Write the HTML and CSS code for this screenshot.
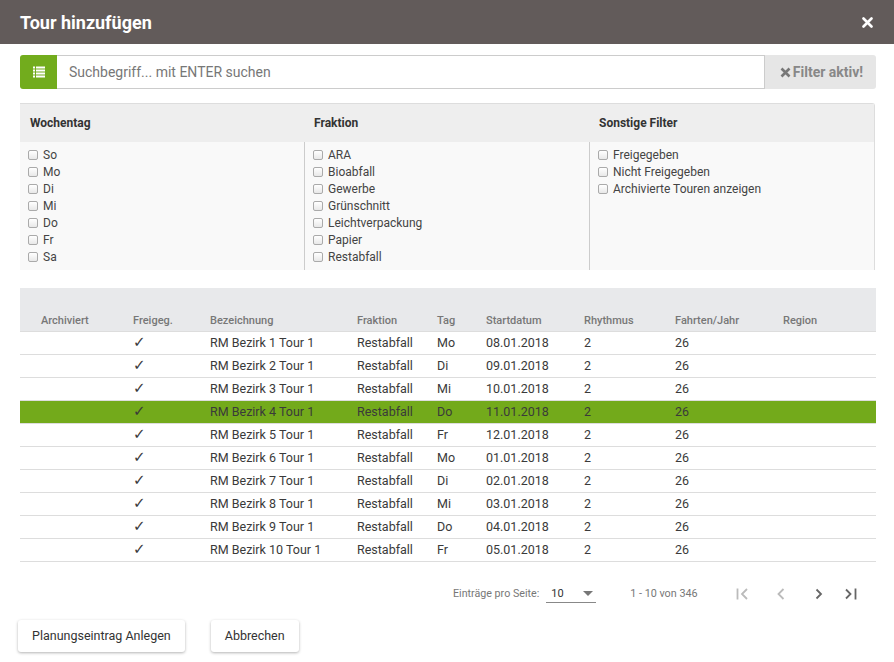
FILE: index.html
```html
<!DOCTYPE html>
<html lang="de">
<head>
<meta charset="utf-8">
<title>Tour hinzufügen</title>
<link rel="stylesheet" href="styles.css">
</head>
<body>
<div class="dialog">
  <header class="titlebar">
    <h1 class="title">Tour hinzufügen</h1>
    <button class="close" aria-label="Schließen">
      <svg width="11" height="11" viewBox="0 0 11 11"><path d="M1.5 1.5L9.5 9.5M9.5 1.5L1.5 9.5" stroke="#fff" stroke-width="2.6" stroke-linecap="round"/></svg>
    </button>
  </header>

  <div class="searchbar">
    <button class="listbtn" aria-label="Filter">
      <svg width="12" height="12" viewBox="0 0 12 12">
        <rect x="0" y="0.5" width="2" height="2" fill="#fff"/>
        <rect x="3" y="0.5" width="9" height="2" fill="#fff"/>
        <rect x="0" y="3.5" width="2" height="2" fill="#fff"/>
        <rect x="3" y="3.5" width="9" height="2" fill="#fff"/>
        <rect x="0" y="6.5" width="2" height="2" fill="#fff"/>
        <rect x="3" y="6.5" width="9" height="2" fill="#fff"/>
        <rect x="0" y="9.5" width="2" height="2" fill="#fff"/>
        <rect x="3" y="9.5" width="9" height="2" fill="#fff"/>
      </svg>
    </button>
    <input class="search" type="text" placeholder="Suchbegriff... mit ENTER suchen">
    <button class="filterbtn">
      <svg width="11" height="11" viewBox="0 0 11 11"><path d="M1.5 1.5L9.5 9.5M9.5 1.5L1.5 9.5" stroke="#777" stroke-width="2.6"/></svg>
      Filter aktiv!
    </button>
  </div>

  <div class="filters">
    <div class="fcol">
      <div class="fhead">Wochentag</div>
      <div class="fbody">
        <label class="opt"><span class="cb"></span>So</label>
        <label class="opt"><span class="cb"></span>Mo</label>
        <label class="opt"><span class="cb"></span>Di</label>
        <label class="opt"><span class="cb"></span>Mi</label>
        <label class="opt"><span class="cb"></span>Do</label>
        <label class="opt"><span class="cb"></span>Fr</label>
        <label class="opt"><span class="cb"></span>Sa</label>
      </div>
    </div>
    <div class="fcol mid">
      <div class="fhead">Fraktion</div>
      <div class="fbody bordered">
        <label class="opt"><span class="cb"></span>ARA</label>
        <label class="opt"><span class="cb"></span>Bioabfall</label>
        <label class="opt"><span class="cb"></span>Gewerbe</label>
        <label class="opt"><span class="cb"></span>Grünschnitt</label>
        <label class="opt"><span class="cb"></span>Leichtverpackung</label>
        <label class="opt"><span class="cb"></span>Papier</label>
        <label class="opt"><span class="cb"></span>Restabfall</label>
      </div>
    </div>
    <div class="fcol last">
      <div class="fhead">Sonstige Filter</div>
      <div class="fbody bordered">
        <label class="opt"><span class="cb"></span>Freigegeben</label>
        <label class="opt"><span class="cb"></span>Nicht Freigegeben</label>
        <label class="opt"><span class="cb"></span>Archivierte Touren anzeigen</label>
      </div>
    </div>
  </div>

  <table class="tours">
    <colgroup>
      <col class="c1"><col class="c2"><col class="c3"><col class="c4"><col class="c5"><col class="c6"><col class="c7"><col class="c8"><col class="c9">
    </colgroup>
    <thead>
      <tr><th class="first">Archiviert</th><th>Freigeg.</th><th>Bezeichnung</th><th>Fraktion</th><th>Tag</th><th>Startdatum</th><th>Rhythmus</th><th>Fahrten/Jahr</th><th>Region</th></tr>
    </thead>
    <tbody>
      <tr><td class="first"></td><td class="chk">✓</td><td>RM Bezirk 1 Tour 1</td><td>Restabfall</td><td>Mo</td><td>08.01.2018</td><td>2</td><td>26</td><td></td></tr>
      <tr><td class="first"></td><td class="chk">✓</td><td>RM Bezirk 2 Tour 1</td><td>Restabfall</td><td>Di</td><td>09.01.2018</td><td>2</td><td>26</td><td></td></tr>
      <tr><td class="first"></td><td class="chk">✓</td><td>RM Bezirk 3 Tour 1</td><td>Restabfall</td><td>Mi</td><td>10.01.2018</td><td>2</td><td>26</td><td></td></tr>
      <tr class="selected"><td class="first"></td><td class="chk">✓</td><td>RM Bezirk 4 Tour 1</td><td>Restabfall</td><td>Do</td><td>11.01.2018</td><td>2</td><td>26</td><td></td></tr>
      <tr><td class="first"></td><td class="chk">✓</td><td>RM Bezirk 5 Tour 1</td><td>Restabfall</td><td>Fr</td><td>12.01.2018</td><td>2</td><td>26</td><td></td></tr>
      <tr><td class="first"></td><td class="chk">✓</td><td>RM Bezirk 6 Tour 1</td><td>Restabfall</td><td>Mo</td><td>01.01.2018</td><td>2</td><td>26</td><td></td></tr>
      <tr><td class="first"></td><td class="chk">✓</td><td>RM Bezirk 7 Tour 1</td><td>Restabfall</td><td>Di</td><td>02.01.2018</td><td>2</td><td>26</td><td></td></tr>
      <tr><td class="first"></td><td class="chk">✓</td><td>RM Bezirk 8 Tour 1</td><td>Restabfall</td><td>Mi</td><td>03.01.2018</td><td>2</td><td>26</td><td></td></tr>
      <tr><td class="first"></td><td class="chk">✓</td><td>RM Bezirk 9 Tour 1</td><td>Restabfall</td><td>Do</td><td>04.01.2018</td><td>2</td><td>26</td><td></td></tr>
      <tr><td class="first"></td><td class="chk">✓</td><td>RM Bezirk 10 Tour 1</td><td>Restabfall</td><td>Fr</td><td>05.01.2018</td><td>2</td><td>26</td><td></td></tr>
    </tbody>
  </table>

  <div class="paginator">
    <span class="pp-label">Einträge pro Seite:</span>
    <div class="pp-select">
      <span>10</span>
      <svg width="10" height="5" viewBox="0 0 10 5"><path d="M0 0H10L5 5Z" fill="#777"/></svg>
    </div>
    <span class="range">1 - 10 von 346</span>
    <div class="navs">
      <button class="nav disabled" aria-label="Erste Seite">
        <svg width="14" height="14" viewBox="0 0 14 14"><path d="M1.5 1.5V12.5" stroke="#bbb" stroke-width="1.8"/><path d="M11 2L6 7L11 12" fill="none" stroke="#bbb" stroke-width="1.8"/></svg>
      </button>
      <button class="nav disabled" aria-label="Vorherige Seite">
        <svg width="14" height="14" viewBox="0 0 14 14"><path d="M9.5 2L4.5 7L9.5 12" fill="none" stroke="#bbb" stroke-width="1.8"/></svg>
      </button>
      <button class="nav" aria-label="Nächste Seite">
        <svg width="14" height="14" viewBox="0 0 14 14"><path d="M4.5 2.5L9 7L4.5 11.5" fill="none" stroke="#666" stroke-width="1.8"/></svg>
      </button>
      <button class="nav" aria-label="Letzte Seite">
        <svg width="14" height="14" viewBox="0 0 14 14"><path d="M2 2.5L6.5 7L2 11.5" fill="none" stroke="#666" stroke-width="1.8"/><path d="M11.5 1.5V12.5" stroke="#666" stroke-width="1.8"/></svg>
      </button>
    </div>
  </div>

  <div class="actions">
    <button class="btn">Planungseintrag Anlegen</button>
    <button class="btn">Abbrechen</button>
  </div>
</div>
</body>
</html>
```

FILE: styles.css
```css
* { box-sizing: border-box; }
html, body { margin: 0; padding: 0; background: #fff; }
body {
  font-family: Roboto, "Liberation Sans", Arial, sans-serif;
  color: #333;
  width: 894px;
  height: 662px;
  overflow: hidden;
}
button { font-family: inherit; cursor: pointer; }

.titlebar {
  height: 44px;
  background: #625b5a;
  display: flex;
  align-items: center;
  justify-content: space-between;
  padding: 0 21px 0 20px;
}
.title {
  margin: 0;
  font-size: 18px;
  font-weight: 700;
  color: #fff;
  letter-spacing: 0;
}
.close {
  border: 0;
  background: transparent;
  padding: 0;
  width: 11px;
  height: 11px;
  display: flex;
}

.searchbar {
  display: flex;
  margin: 11px 18px 0 20px;
  height: 34px;
}
.listbtn {
  width: 37px;
  border: 0;
  background: #72ac1d;
  border-radius: 3px 0 0 3px;
  display: flex;
  align-items: center;
  justify-content: center;
  padding: 0;
}
.search {
  flex: 1;
  border: 1px solid #ccc;
  border-left: 0;
  font-family: inherit;
  font-size: 14px;
  padding: 0 12px;
  color: #555;
  outline: none;
}
.search::placeholder { color: #777; }
.filterbtn {
  width: 111px;
  border: 0;
  background: #e6e6e6;
  border-radius: 0 3px 3px 0;
  color: #888;
  font-weight: 700;
  font-size: 14px;
  display: flex;
  align-items: center;
  justify-content: center;
  gap: 2px;
  padding: 0 0 0 2px;
}

.filters {
  display: flex;
  margin: 14px 19px 0 20px;
  height: 167px;
  border-top: 1px solid #ddd;
  border-right: 1px solid #ddd;
  border-top-right-radius: 3px;
}
.fcol { flex: 0 0 284px; display: flex; flex-direction: column; }
.fcol.mid { flex-basis: 285px; }
.fcol.last { flex: 1; }
.fhead {
  height: 38px;
  background: #eee;
  font-size: 12px;
  font-weight: 700;
  display: flex;
  align-items: center;
  padding-left: 10px;
  color: #333;
}
.fbody {
  flex: 1;
  background: #f9f9f9;
  padding: 4px 0 0 8px;
  display: flex;
  flex-direction: column;
}
.fbody.bordered { border-left: 1px solid #ccc; }
.opt {
  display: flex;
  align-items: center;
  height: 17px;
  font-size: 12px;
  color: #444;
}
.cb {
  width: 10px;
  height: 10px;
  border: 1px solid #aaa;
  border-radius: 2px;
  background: linear-gradient(#fff, #e8e8e8);
  margin-right: 5px;
  flex: none;
}

.tours {
  margin: 18px 0 0 20px;
  width: 856px;
  table-layout: fixed;
  border-collapse: collapse;
}
.c1 { width: 113px; }
.c2 { width: 77px; }
.c3 { width: 147px; }
.c4 { width: 80px; }
.c5 { width: 49px; }
.c6 { width: 98px; }
.c7 { width: 91px; }
.c8 { width: 108px; }
.c9 { width: 93px; }
.tours th {
  height: 43px;
  background: #e8e9eb;
  font-size: 11px;
  font-weight: 500;
  color: #777;
  text-align: left;
  vertical-align: bottom;
  padding: 0 0 4px 0;
  border-bottom: 1px solid #ddd;
}
.tours td {
  height: 23px;
  font-size: 12.5px;
  color: #3a3a3a;
  padding: 0;
  border-bottom: 1px solid #ddd;
  white-space: nowrap;
}
.tours .first { padding-left: 21px; }
.tours td.chk { font-family: "DejaVu Sans", sans-serif; font-size: 15px; padding-left: 0; line-height: 1; }
.tours tr.selected td { background: #73aa1b; }

.paginator {
  display: flex;
  align-items: center;
  height: 28px;
  margin: 18px 0 0 453px;
  font-size: 10.7px;
  color: #777;
}
.pp-label { margin-right: 7px; font-size: 10.7px; }
.pp-select {
  width: 50px;
  height: 18px;
  border-bottom: 1px solid #888;
  display: flex;
  align-items: center;
  justify-content: space-between;
  padding: 0 3px 0 5px;
  font-size: 11px;
  color: #333;
}
.range { margin-left: 34px; font-size: 10.8px; }
.navs { display: flex; margin-left: 26px; }
.nav {
  border: 0;
  background: transparent;
  width: 38px;
  height: 28px;
  padding: 0;
  display: flex;
  align-items: center;
  justify-content: center;
}
.nav:nth-child(4) { margin-left: -6px; }

.actions {
  display: flex;
  gap: 26px;
  margin: 12px 0 0 18px;
}
.btn {
  height: 32px;
  background: #fff;
  border: 0;
  border-radius: 3px;
  box-shadow: 0 1px 3px rgba(0,0,0,0.3);
  font-size: 12.5px;
  color: #333;
  padding: 0 14px;
}
```
